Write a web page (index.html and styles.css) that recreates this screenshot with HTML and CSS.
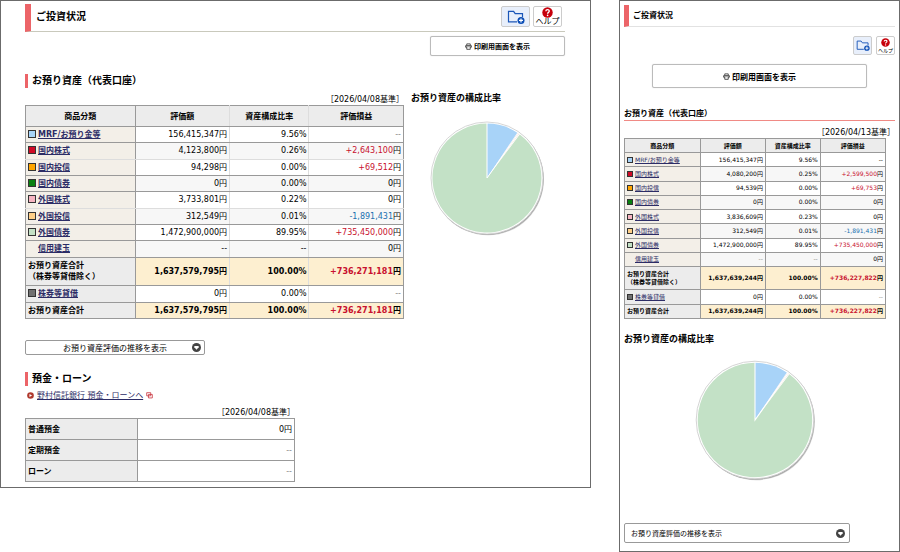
FILE: index.html
```html
<!DOCTYPE html>
<html lang="ja">
<head>
    <meta charset="UTF-8">
    <meta name="viewport" content="width=device-width, initial-scale=1.0">
    <title>ご投資状況</title>
    <link rel="stylesheet" href="styles.css">
</head>
<body>
    <!-- 共通アイコン -->
    <svg class="defs" width="0" height="0" aria-hidden="true">
        <symbol id="icon-folder" viewBox="0 0 18 14">
            <path d="M15.5 7V3.6H8.2L6.6 1.3H1.5v10.6h8.5" fill="none" stroke="#1a56b8" stroke-width="1.2"/>
            <circle cx="14" cy="10.4" r="3.5" fill="#0b4db5"/>
            <path d="M14 8.4v4M12 10.4h4" stroke="#fff" stroke-width="1.2"/>
        </symbol>
        <symbol id="icon-help" viewBox="0 0 12 12">
            <circle cx="6" cy="6" r="5.7" fill="#c7000b"/>
            <path d="M4.2 4.7C4.2 2.3 8 2.4 7.9 4.6 7.8 5.9 6.1 5.9 6.1 7.4" fill="none" stroke="#fff" stroke-width="1.5"/>
            <circle cx="6.1" cy="9.2" r="0.9" fill="#fff"/>
        </symbol>
        <symbol id="icon-print" viewBox="0 0 8 8">
            <path d="M2 2.3V1h4v1.3" fill="none" stroke="#111" stroke-width="0.8"/>
            <path d="M1 2.5h6q.6 0 .6.6v2H.4v-2q0-.6.6-.6z" fill="#111"/>
            <path d="M1.4 3.8h5.2" stroke="#fff" stroke-width="0.9"/>
            <path d="M2 4.8v2.4h4V4.8" fill="#fff" stroke="#111" stroke-width="0.8"/>
        </symbol>
        <symbol id="icon-down" viewBox="0 0 10 10">
            <circle cx="5" cy="5" r="5" fill="#444"/>
            <path d="M2.6 3.3h4.8v1.4L5 7.4 2.6 4.7z" fill="#fff"/>
        </symbol>
        <symbol id="pie" viewBox="0 0 120 120">
            <circle cx="61" cy="61.3" r="56" fill="#777" opacity="0.35"/>
            <circle cx="60.6" cy="60.8" r="56" fill="#888" opacity="0.6"/>
            <circle cx="60" cy="60" r="56" fill="#fff" stroke="#ccc" stroke-width="0.8"/>
            <path d="M60 60L90.8 15A54.5 54.5 0 0 1 92.2 16z" fill="#f5e4dc"/>
            <path d="M60 60V5.5A54.5 54.5 0 0 1 90.3 14.7z" fill="#a8d3f8"/>
            <path d="M60 60L92.8 16.5A54.5 54.5 0 1 1 60 5.5z" fill="#c3e1c6"/>
            <path d="M60 5V60L91.5 15.4" fill="none" stroke="#fff" stroke-width="1"/>
        </symbol>
    </svg>

    <div class="screens">
        <main class="panel panel-pc">
            <header class="page-head">
                <h1>ご投資状況</h1>
                <div class="tools">
                    <button class="tool tool-folder" aria-label="フォルダに追加"><svg><use href="#icon-folder"/></svg></button>
                    <button class="tool tool-help"><svg><use href="#icon-help"/></svg>ヘルプ</button>
                </div>
            </header>
            <button class="print"><svg><use href="#icon-print"/></svg>印刷用画面を表示</button>

            <h2>お預り資産（代表口座）</h2>
            <div class="assets-wrap">
                <div class="assets-main">
                    <p class="date">［2026/04/08基準］</p>
                    <table class="assets">
                        <thead>
                            <tr><th>商品分類</th><th>評価額</th><th>資産構成比率</th><th>評価損益</th></tr>
                        </thead>
                        <tbody>
                            <tr><th><i class="mark mrf"></i><a href="#">MRF/お預り金等</a></th><td>156,415,347円</td><td>9.56%</td><td class="none">--</td></tr>
                            <tr><th><i class="mark jp-stock"></i><a href="#">国内株式</a></th><td>4,123,800円</td><td>0.26%</td><td><span class="plus">+2,643,100</span>円</td></tr>
                            <tr><th><i class="mark jp-fund"></i><a href="#">国内投信</a></th><td>94,298円</td><td>0.00%</td><td><span class="plus">+69,512</span>円</td></tr>
                            <tr><th><i class="mark jp-bond"></i><a href="#">国内債券</a></th><td>0円</td><td>0.00%</td><td>0円</td></tr>
                            <tr><th><i class="mark fr-stock"></i><a href="#">外国株式</a></th><td>3,733,801円</td><td>0.22%</td><td>0円</td></tr>
                            <tr><th><i class="mark fr-fund"></i><a href="#">外国投信</a></th><td>312,549円</td><td>0.01%</td><td><span class="minus">-1,891,431</span>円</td></tr>
                            <tr><th><i class="mark fr-bond"></i><a href="#">外国債券</a></th><td>1,472,900,000円</td><td>89.95%</td><td><span class="plus">+735,450,000</span>円</td></tr>
                            <tr><th><i class="mark empty"></i><a href="#">信用建玉</a></th><td>--</td><td>--</td><td>0円</td></tr>
                            <tr class="total subtotal"><th>お預り資産合計<br>（株券等貸借除く）</th><td>1,637,579,795円</td><td>100.00%</td><td><span class="plus">+736,271,181</span>円</td></tr>
                            <tr><th class="lending"><i class="mark lend"></i><a href="#">株券等貸借</a></th><td>0円</td><td>0.00%</td><td class="none">--</td></tr>
                            <tr class="total"><th>お預り資産合計</th><td>1,637,579,795円</td><td>100.00%</td><td><span class="plus">+736,271,181</span>円</td></tr>
                        </tbody>
                    </table>
                </div>
                <section class="ratio">
                    <h3>お預り資産の構成比率</h3>
                    <svg class="pie" role="img" aria-label="お預り資産の構成比率"><use href="#pie"/></svg>
                </section>
            </div>
            <button class="trend"><span>お預り資産評価の推移を表示</span><svg><use href="#icon-down"/></svg></button>

            <h2 class="loan-head">預金・ローン</h2>
            <p class="bank">
                <svg class="bullet" viewBox="0 0 8 8"><circle cx="4" cy="4" r="3.8" fill="#b03a2e"/><path d="M2.8 2.2L5.8 4 2.8 5.8z" fill="#fff"/></svg>
                <a href="#">野村信託銀行 預金・ローンへ</a>
                <svg class="window" viewBox="0 0 8 8"><path d="M.8.8h4.6v3.6H.8zM2.8 2.8h4.4v4H2.8z" fill="#fff" stroke="#c8323c" stroke-width="0.9"/></svg>
            </p>
            <div class="loan">
                <p class="date">［2026/04/08基準］</p>
                <table>
                    <tr><th>普通預金</th><td>0円</td></tr>
                    <tr><th>定期預金</th><td class="none">--</td></tr>
                    <tr><th>ローン</th><td class="none">--</td></tr>
                </table>
            </div>
        </main>

        <aside class="panel panel-sp">
            <header class="page-head">
                <h1>ご投資状況</h1>
            </header>
            <div class="tools">
                <button class="tool tool-folder" aria-label="フォルダに追加"><svg><use href="#icon-folder"/></svg></button>
                <button class="tool tool-help"><svg><use href="#icon-help"/></svg>ヘルプ</button>
            </div>
            <button class="print"><svg><use href="#icon-print"/></svg>印刷用画面を表示</button>

            <h2>お預り資産（代表口座）</h2>
            <p class="date">［2026/04/13基準］</p>
            <div class="sp-body">
                <table class="assets">
                    <thead>
                        <tr><th>商品分類</th><th>評価額</th><th>資産構成比率</th><th>評価損益</th></tr>
                    </thead>
                    <tbody>
                        <tr><th><i class="mark mrf"></i><a href="#">MRF/お預り金等</a></th><td>156,415,347円</td><td>9.56%</td><td>--</td></tr>
                        <tr><th><i class="mark jp-stock"></i><a href="#">国内株式</a></th><td>4,080,200円</td><td>0.25%</td><td><span class="plus">+2,599,500</span>円</td></tr>
                        <tr><th><i class="mark jp-fund"></i><a href="#">国内投信</a></th><td>94,539円</td><td>0.00%</td><td><span class="plus">+69,753</span>円</td></tr>
                        <tr><th><i class="mark jp-bond"></i><a href="#">国内債券</a></th><td>0円</td><td>0.00%</td><td>0円</td></tr>
                        <tr><th><i class="mark fr-stock"></i><a href="#">外国株式</a></th><td>3,836,609円</td><td>0.23%</td><td>0円</td></tr>
                        <tr><th><i class="mark fr-fund"></i><a href="#">外国投信</a></th><td>312,549円</td><td>0.01%</td><td><span class="minus">-1,891,431</span>円</td></tr>
                        <tr><th><i class="mark fr-bond"></i><a href="#">外国債券</a></th><td>1,472,900,000円</td><td>89.95%</td><td><span class="plus">+735,450,000</span>円</td></tr>
                        <tr><th><i class="mark empty"></i><a href="#">信用建玉</a></th><td class="none">--</td><td class="none">--</td><td>0円</td></tr>
                        <tr class="total subtotal"><th>お預り資産合計<br>（株券等貸借除く）</th><td>1,637,639,244円</td><td>100.00%</td><td><span class="plus">+736,227,822</span>円</td></tr>
                        <tr><th class="lending"><i class="mark lend"></i><a href="#">株券等貸借</a></th><td>0円</td><td>0.00%</td><td class="none">--</td></tr>
                        <tr class="total"><th>お預り資産合計</th><td>1,637,639,244円</td><td>100.00%</td><td><span class="plus">+736,227,822</span>円</td></tr>
                    </tbody>
                </table>
                <h3>お預り資産の構成比率</h3>
                <svg class="pie" role="img" aria-label="お預り資産の構成比率"><use href="#pie"/></svg>
            </div>
            <button class="trend"><span>お預り資産評価の推移を表示</span><svg><use href="#icon-down"/></svg></button>
        </aside>
    </div>
</body>
</html>
```
FILE: styles.css
```css
* {
    box-sizing: border-box;
}
body {
    margin: 0;
    background: #fff;
    color: #000;
    font-family: "DejaVu Sans", "Noto Sans CJK JP", sans-serif;
    font-size: 8px;
    line-height: 11px;
    text-spacing-trim: space-all;
}
h1, h2, h3, p {
    margin: 0;
}
button {
    font-family: inherit;
    color: inherit;
    background: #fff;
    cursor: pointer;
}
a {
    color: #2c2c66;
}
.defs {
    display: block;
    height: 0;
}
.screens {
    display: grid;
    grid-template-columns: minmax(0, 591fr) minmax(0, 281fr);
    align-items: start;
    gap: 28px;
}
.panel {
    border: 1px solid #6b6b6b;
}
.panel-pc {
    padding: 3px 25px 5px 24px;
}
.panel-sp {
    padding: 4px 4px 8px;
}

/* ページ見出し */
.page-head {
    display: flex;
    justify-content: space-between;
    height: 28px;
    padding-left: 5px;
    border-left: 6px solid #ec6468;
    border-bottom: 1px solid #c9c9bc;
}
h1 {
    font-size: 10px;
    line-height: 25px;
}
.tools {
    display: flex;
    gap: 3px;
    padding: 2px 3px 0 0;
}
.tool {
    display: flex;
    flex-direction: column;
    align-items: center;
    justify-content: center;
    width: 29px;
    height: 21px;
    padding: 0;
    border: 1px solid #ccc;
    border-radius: 2px;
    font-size: 8px;
    line-height: 8px;
    white-space: nowrap;
}
.tool-folder {
    background: #e8effb;
}
.tool-folder svg {
    width: 18px;
    height: 14px;
}
.tool-help svg {
    width: 11px;
    height: 11px;
    flex: none;
}
.print {
    display: flex;
    align-items: center;
    justify-content: center;
    gap: 2px;
    width: 135px;
    height: 20px;
    margin: 4px 0 0 auto;
    border: 1px solid #bbb;
    border-radius: 2px;
    box-shadow: 0 0 1px #ccc;
    font-size: 7px;
    font-weight: bold;
}
.print svg {
    width: 7px;
    height: 7px;
}
h2 {
    height: 14px;
    margin-top: 18px;
    padding-left: 4px;
    border-left: 3px solid #ec6468;
    font-size: 10px;
    line-height: 13px;
}
h3 {
    font-size: 9px;
    line-height: 12px;
}
.date {
    text-align: right;
}

/* 資産一覧 */
.assets-wrap {
    display: grid;
    grid-template-columns: minmax(0, 379fr) minmax(0, 154fr);
    gap: 7px;
    margin-top: 6px;
}
.ratio h3 {
    margin-top: -2px;
}
.pie {
    display: block;
    width: 120px;
    height: 120px;
    margin: 14px auto 0 16px;
}
table {
    width: 100%;
    border-collapse: collapse;
}
th, td {
    padding: 0 2px;
    border: 1px solid #999;
    white-space: nowrap;
}
td {
    text-align: right;
}
.assets {
    height: 214px;
    table-layout: fixed;
}
.assets tr {
    height: 16px;
}
.assets thead tr {
    height: 21px;
}
.assets thead th {
    background: #ececec;
    text-align: center;
}
.assets thead th:nth-child(1) {
    width: 29%;
}
.assets thead th:nth-child(2) {
    width: 25%;
}
.assets thead th:nth-child(3) {
    width: 21%;
}
.assets tbody th {
    background: #f3efe8;
    text-align: left;
}
.assets tbody tr:nth-child(even) td {
    background: #f7f7f7;
}
.assets .subtotal {
    height: 28px;
}
.assets tbody .total th,
.assets tbody th.lending {
    background: #ececec;
}
.assets tbody .total td {
    background: #fdefd0;
    font-weight: bold;
}
.assets tbody tr:nth-child(10) td {
    background: #fff;
}
.panel-pc .assets tr > :nth-child(2),
.panel-pc .assets tr > :nth-child(3) {
    border-right-color: #ddd;
}
.panel-pc .assets tbody tr:nth-child(2) > *,
.panel-pc .assets tbody tr:nth-child(5) > * {
    border-bottom-color: #ddd;
}
.mark {
    display: inline-block;
    width: 8px;
    height: 8px;
    margin-right: 2px;
    border: 1px solid #333;
    vertical-align: -1px;
}
.mrf { background: #a8d3f8; }
.jp-stock { background: #d00a26; }
.jp-fund { background: #ffa500; }
.jp-bond { background: #0a8010; }
.fr-stock { background: #f7b5c2; }
.fr-fund { background: #ffcf87; }
.fr-bond { background: #c3e1c6; }
.lend { background: #707070; }
.empty { border-color: transparent; }
.plus {
    color: #c8102e;
}
.minus {
    color: #2070b0;
}
.none {
    color: #888;
}

.trend {
    display: flex;
    align-items: center;
    justify-content: space-between;
    width: 180px;
    height: 15px;
    margin-top: 21px;
    padding: 0 3px 0 37px;
    border: 1px solid #999;
    border-radius: 2px;
    font-size: 8px;
}
.trend svg {
    width: 9px;
    height: 9px;
}

/* 預金・ローン */
.loan-head {
    margin-top: 17px;
}
.bank {
    display: flex;
    align-items: center;
    gap: 3px;
    margin: 4px 0 6px;
    padding-left: 2px;
}
.bank svg {
    width: 7px;
    height: 7px;
}
.loan {
    width: 50%;
}
.loan tr {
    height: 21px;
}
.loan th {
    width: 112px;
    background: #ececec;
    text-align: left;
}

/* スマートフォン表示 */
.panel-sp .page-head {
    height: 22px;
    padding-left: 4px;
    border-left-width: 5px;
    border-bottom-color: #e2e2e2;
}
.panel-sp h1 {
    font-size: 8px;
    line-height: 21px;
}
.panel-sp .tools {
    justify-content: flex-end;
    gap: 4px;
    padding: 9px 0 0;
}
.panel-sp .tool {
    width: 19px;
    height: 19px;
    font-size: 5px;
    line-height: 6px;
}
.panel-sp .tool-folder svg {
    width: 14px;
    height: 11px;
}
.panel-sp .tool-help svg {
    width: 9px;
    height: 9px;
}
.panel-sp .print {
    width: 215px;
    height: 24px;
    margin: 9px auto 0;
    font-size: 8px;
}
.panel-sp h2 {
    margin: 19px 0 6px;
    padding: 0;
    border-left: 0;
    border-bottom: 1px solid #f08a85;
    font-size: 8px;
}
.sp-body {
    margin-right: 9px;
}
.panel-sp .assets {
    height: 181px;
    font-size: 6px;
    line-height: 8px;
}
.panel-sp .assets tr {
    height: 14px;
}
.panel-sp .assets .subtotal {
    height: 23px;
}
.panel-sp .assets a {
    font-weight: normal;
}
.panel-sp .mark {
    width: 6px;
    height: 6px;
}
.panel-sp h3 {
    margin-top: 14px;
}
.panel-sp .pie {
    width: 126px;
    height: 126px;
    margin: 12px auto 0;
}
.panel-sp .trend {
    width: 226px;
    height: 20px;
    margin-top: 40px;
    padding: 0 4px 0 6px;
    font-size: 7px;
}
```
